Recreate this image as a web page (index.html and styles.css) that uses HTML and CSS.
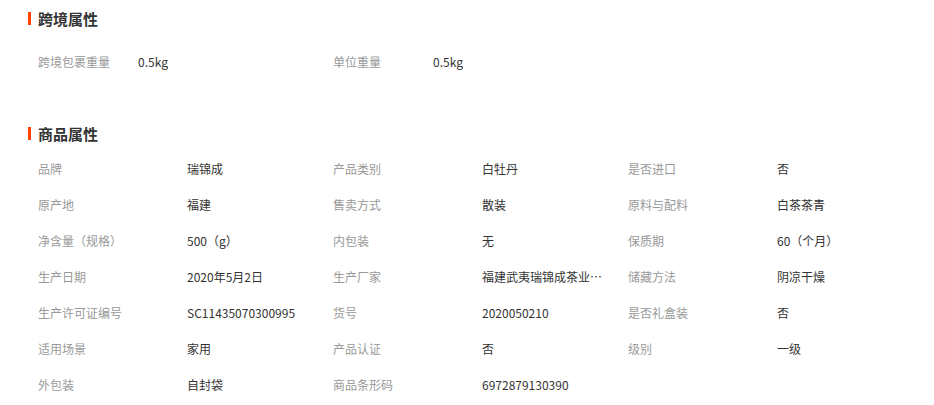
FILE: index.html
```html
<!DOCTYPE html>
<html lang="zh-CN">
<head>
    <meta charset="UTF-8">
    <meta name="viewport" content="width=device-width, initial-scale=1.0">
    <title>商品属性</title>
    <link rel="stylesheet" href="styles.css">
</head>
<body>
    <div class="section section-cross">
        <h3 class="section-title"><span class="bar"></span>跨境属性</h3>
        <div class="attr-list">
            <div class="attr">
                <span class="attr-name">跨境包裹重量</span>
                <span class="attr-value">0.5kg</span>
            </div>
            <div class="attr">
                <span class="attr-name">单位重量</span>
                <span class="attr-value">0.5kg</span>
            </div>
        </div>
    </div>

    <div class="section section-goods">
        <h3 class="section-title"><span class="bar"></span>商品属性</h3>
        <div class="attr-list">
            <div class="attr"><span class="attr-name">品牌</span><span class="attr-value">瑞锦成</span></div>
            <div class="attr"><span class="attr-name">产品类别</span><span class="attr-value">白牡丹</span></div>
            <div class="attr"><span class="attr-name">是否进口</span><span class="attr-value">否</span></div>

            <div class="attr"><span class="attr-name">原产地</span><span class="attr-value">福建</span></div>
            <div class="attr"><span class="attr-name">售卖方式</span><span class="attr-value">散装</span></div>
            <div class="attr"><span class="attr-name">原料与配料</span><span class="attr-value">白茶茶青</span></div>

            <div class="attr"><span class="attr-name">净含量（规格）</span><span class="attr-value">500（g）</span></div>
            <div class="attr"><span class="attr-name">内包装</span><span class="attr-value">无</span></div>
            <div class="attr"><span class="attr-name">保质期</span><span class="attr-value">60（个月）</span></div>

            <div class="attr"><span class="attr-name">生产日期</span><span class="attr-value">2020年5月2日</span></div>
            <div class="attr"><span class="attr-name">生产厂家</span><span class="attr-value">福建武夷瑞锦成茶业有限公司</span></div>
            <div class="attr"><span class="attr-name">储藏方法</span><span class="attr-value">阴凉干燥</span></div>

            <div class="attr"><span class="attr-name">生产许可证编号</span><span class="attr-value">SC11435070300995</span></div>
            <div class="attr"><span class="attr-name">货号</span><span class="attr-value">2020050210</span></div>
            <div class="attr"><span class="attr-name">是否礼盒装</span><span class="attr-value">否</span></div>

            <div class="attr"><span class="attr-name">适用场景</span><span class="attr-value">家用</span></div>
            <div class="attr"><span class="attr-name">产品认证</span><span class="attr-value">否</span></div>
            <div class="attr"><span class="attr-name">级别</span><span class="attr-value">一级</span></div>

            <div class="attr"><span class="attr-name">外包装</span><span class="attr-value">自封袋</span></div>
            <div class="attr"><span class="attr-name">商品条形码</span><span class="attr-value">6972879130390</span></div>
        </div>
    </div>
</body>
</html>
```

FILE: styles.css
```css
body {
    font-family: "Microsoft YaHei", "Noto Sans CJK SC", sans-serif;
    font-size: 12px;
    color: #333;
    background-color: #ffffff;
    margin: 0;
    padding: 0;
}
.section {
    padding: 0 28px;
}
.section-title {
    display: flex;
    align-items: center;
    height: 20px;
    margin: 0;
    font-size: 15px;
    font-weight: bold;
    color: #333;
}
.bar {
    display: inline-block;
    width: 3px;
    height: 13px;
    margin-right: 7px;
    background-color: #ff4400;
}
.section-cross .section-title {
    margin-top: 8px;
}
.section-cross .attr-list {
    margin-top: 15px;
}
.section-goods .section-title {
    margin-top: 44px;
}
.section-goods .attr-list {
    margin-top: 7px;
}
.attr-list {
    display: grid;
    grid-template-columns: repeat(3, 295px);
    padding-left: 10px;
}
.attr {
    display: flex;
    align-items: center;
    height: 36px;
}
.attr-name {
    width: 149px;
    flex-shrink: 0;
    color: #999;
}
.section-cross .attr-name {
    width: 100px;
}
.attr-value {
    max-width: 126px;
    color: #333;
    white-space: nowrap;
    overflow: hidden;
    text-overflow: ellipsis;
}
```
